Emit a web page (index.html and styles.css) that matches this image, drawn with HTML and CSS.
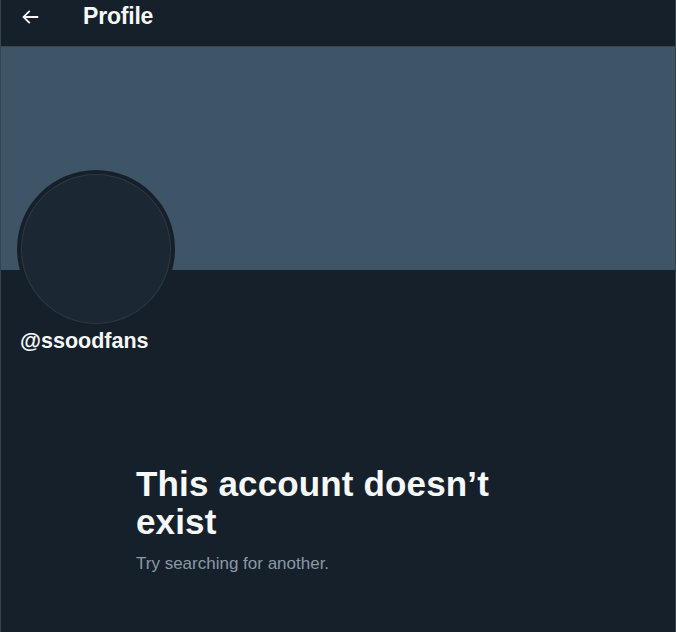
FILE: index.html
```html
<!DOCTYPE html>
<html>
<head>
<meta charset="utf-8">
<link rel="stylesheet" href="styles.css">
</head>
<body>
<div class="page">
  <header class="topbar">
    <button class="back" aria-label="Back">
      <svg viewBox="0 0 24 24" width="22" height="22"><path fill="#f7f9f9" d="M7.414 13l5.043 5.04-1.414 1.42L3.586 12l7.457-7.46 1.414 1.42L7.414 11H21v2H7.414z"/></svg>
    </button>
    <h1 class="title">Profile</h1>
  </header>
  <div class="banner"></div>
  <div class="profile">
    <div class="avatar"><div class="avatar-inner"></div></div>
    <div class="handle">@ssoodfans</div>
  </div>
  <section class="empty">
    <h2 class="empty-title">This account doesn’t exist</h2>
    <p class="empty-sub">Try searching for another.</p>
  </section>
</div>
</body>
</html>
```
FILE: styles.css
```css
html, body {
  margin: 0;
  padding: 0;
  background: #16202b;
}
body {
  font-family: "Liberation Sans", Arial, sans-serif;
  color: #f7f9f9;
}
.page {
  width: 674px;
  height: 632px;
  border-left: 1px solid #38444d;
  border-right: 1px solid #38444d;
  background: #16202b;
  overflow: hidden;
}
.topbar {
  height: 46px;
  display: flex;
  align-items: center;
  padding: 0 16px 0 11px;
  border-bottom: 1px solid #38444d;
  box-sizing: content-box;
}
.back {
  width: 36px;
  height: 36px;
  display: flex;
  align-items: center;
  justify-content: center;
  background: none;
  border: none;
  padding: 0;
  margin-right: 35px;
  margin-top: -12px;
}
.title {
  margin: 0;
  margin-top: -14px;
  font-size: 23px;
  font-weight: 700;
  letter-spacing: -0.2px;
}
.banner {
  height: 223px;
  background: #3e5467;
}
.profile {
  display: flex;
  flex-direction: column;
  padding: 0 16px;
}
.avatar {
  width: 158px;
  height: 158px;
  border-radius: 50%;
  background: #172029;
  margin-top: -100px;
  display: flex;
  align-items: center;
  justify-content: center;
}
.avatar-inner {
  width: 150px;
  height: 150px;
  border-radius: 50%;
  background: #1b2733;
  box-shadow: inset 0 0 0 1px #2a3845;
}
.handle {
  margin-top: 1px;
  margin-left: 3px;
  font-size: 21.5px;
  font-weight: 700;
}
.empty {
  padding: 111px 0 0 135px;
}
.empty-title {
  margin: 0;
  font-size: 35px;
  line-height: 38px;
  font-weight: 700;
  width: 400px;
  letter-spacing: 0.15px;
}
.empty-sub {
  margin: 13px 0 0;
  font-size: 17px;
  color: #8b98a5;
}
```
